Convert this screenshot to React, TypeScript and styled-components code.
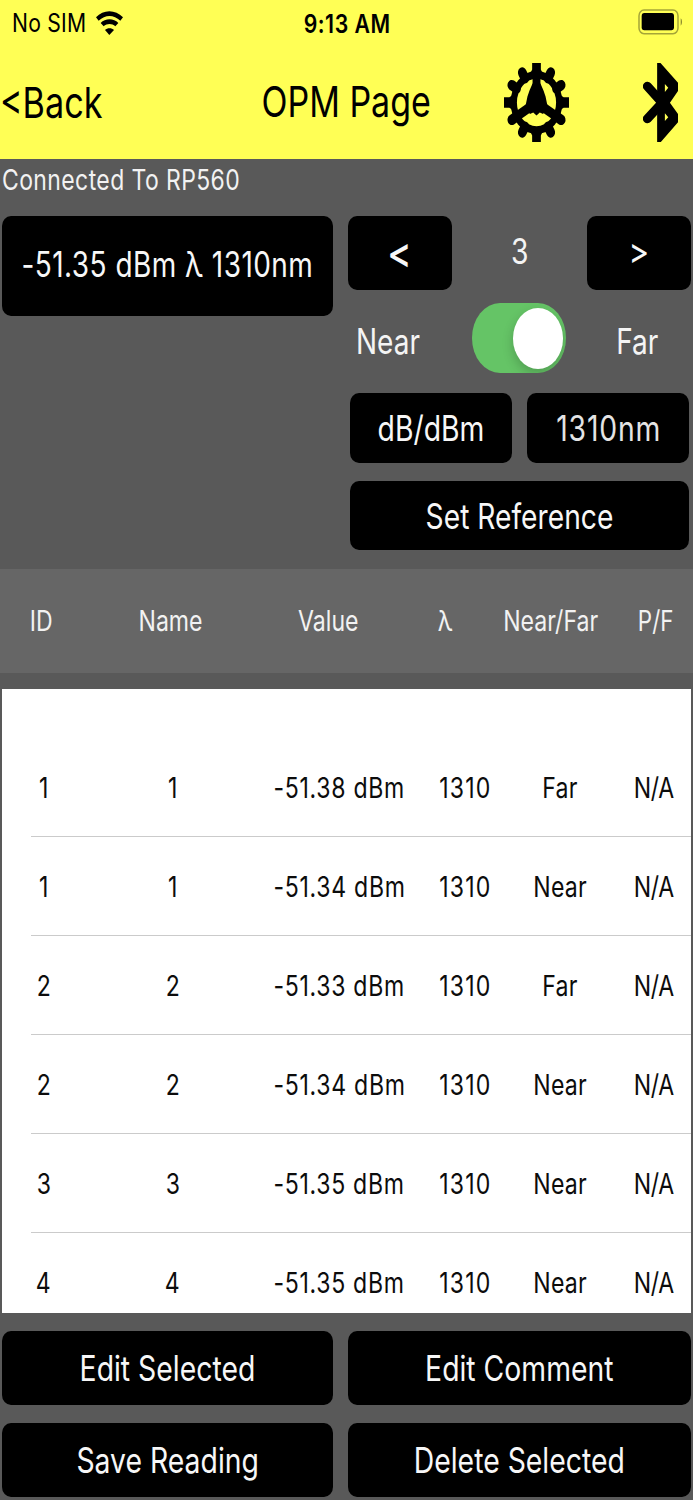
import React, { useState } from "react";
import styled, { createGlobalStyle } from "styled-components";

const GlobalStyle = createGlobalStyle`
  * { box-sizing: border-box; }
  body {
    margin: 0;
    background: #595959;
    font-family: Inter, "Liberation Sans", sans-serif;
    overflow: hidden;
  }
`;

const Screen = styled.main`
  width: 693px;
  height: 1500px;
  display: flex;
  flex-direction: column;
  background: #595959;
  overflow: hidden;
`;

const Label = styled.span<{
  $size: number;
  $narrow?: number;
  $track?: number;
  $weight?: number;
  $left?: boolean;
}>`
  display: block;
  flex: none;
  font-size: ${(p) => p.$size}px;
  font-weight: ${(p) => p.$weight ?? 400};
  letter-spacing: ${(p) => p.$track ?? 0}em;
  margin-right: ${(p) => -(p.$track ?? 0)}em;
  line-height: 1.2;
  white-space: nowrap;
  transform: scaleX(${(p) => p.$narrow ?? 0.81});
  transform-origin: ${(p) => (p.$left ? "left" : "center")} center;
`;

const Header = styled.header`
  height: 159px;
  flex: none;
  background: #ffff55;
  color: #000;
`;

const StatusBar = styled.div`
  height: 47px;
  padding: 0 11px 0 12px;
  display: grid;
  grid-template-columns: 1fr auto 1fr;
  align-items: center;
`;

const Carrier = styled.div`
  display: flex;
  align-items: center;
`;

const CarrierName = styled.div`
  width: 84px;
`;

const BatterySlot = styled.div`
  display: flex;
  justify-content: flex-end;
  padding-bottom: 3px;
`;

const NavBar = styled.nav`
  height: 110px;
  padding-right: 15.5px;
  display: grid;
  grid-template-columns: 262px 168px 1fr;
  align-items: center;
`;

const NavTitle = styled.div`
  display: flex;
  justify-content: center;
  padding-bottom: 1px;
`;

const BackLink = styled.div`
  padding-top: 1px;
`;

const NavIcons = styled.div`
  display: flex;
  justify-content: flex-end;
  gap: 74px;
`;

const Connection = styled.div`
  height: 57px;
  flex: none;
  padding: 5px 0 0 2px;
  color: #f2f2f2;
`;

const Controls = styled.section`
  height: 352.5px;
  flex: none;
  display: grid;
  grid-template-columns: 331px 342.6px;
  column-gap: 15px;
  padding-left: 2px;
  color: #f4f4f4;
`;

const Button = styled.button<{ $w?: number; $h: number; $lift?: number; $dim?: boolean }>`
  width: ${(p) => (p.$w ? `${p.$w}px` : "100%")};
  height: ${(p) => p.$h}px;
  flex: none;
  display: flex;
  align-items: center;
  justify-content: center;
  padding: 0 0 ${(p) => p.$lift ?? 0}px;
  border: 0;
  border-radius: 9px / 10px;
  background: #000;
  color: ${(p) => (p.$dim ? "#e4e4e4" : "#f7f7f7")};
  font-family: inherit;
`;

const Adjustments = styled.div`
  display: flex;
  flex-direction: column;
`;

const Stepper = styled.div`
  height: 74px;
  display: flex;
  justify-content: space-between;
`;

const StepValue = styled.div`
  height: 69px;
  padding-left: 1px;
  display: flex;
  align-items: center;
`;

const EndRow = styled.div`
  height: 103px;
  display: grid;
  grid-template-columns: 80px 182px 55px;
  align-items: center;
  justify-items: center;
  padding-bottom: 7px;
`;

const EndName = styled.div`
  padding-top: 6px;
  width: 80px;
  display: flex;
  justify-content: center;
`;

const Toggle = styled.div<{ $on: boolean }>`
  width: 94px;
  height: 70px;
  padding: 4.5px 3px 4px 4px;
  display: flex;
  justify-content: ${(p) => (p.$on ? "flex-end" : "flex-start")};
  border-radius: 28px / 35px;
  background: ${(p) => (p.$on ? "#65c466" : "#8a8a8a")};
  overflow: hidden;
`;

const Knob = styled.div`
  width: 50.5px;
  height: 61px;
  border-radius: 50%;
  background: #fff;
  box-shadow: 0 5px 12px rgba(0, 0, 0, 0.2);
`;

const UnitRow = styled.div`
  display: flex;
  justify-content: space-between;
  padding: 0 2px;
  margin-bottom: 18px;
`;

const ReferenceRow = styled.div`
  padding: 0 2px;
`;

const TableHead = styled.div`
  height: 104.5px;
  flex: none;
  display: grid;
  grid-template-columns: 82px 178px 137px 97px 113px 86px;
  align-items: center;
  background: #666;
  color: #f2f2f2;
`;

const Cell = styled.div<{ $inset?: number }>`
  min-width: 0;
  display: flex;
  justify-content: center;
  padding-left: ${(p) => p.$inset ?? 0}px;
`;

const List = styled.div`
  height: 624px;
  flex: none;
  margin: 16px 2px 0;
  padding-top: 49px;
  background: #fff;
  color: #0c0c0c;
  overflow: hidden;
`;

const Row = styled.div`
  height: 98px;
  padding-top: 3px;
  display: grid;
  grid-template-columns: 83px 175px 158px 94px 95px 84px;
  align-items: center;
`;

const Separator = styled.div`
  height: 1px;
  margin-left: 29px;
  background: #cbcbcb;
`;

const Actions = styled.footer`
  display: grid;
  grid-template-columns: 331px 343px;
  gap: 18px 15px;
  padding: 18px 0 0 2px;
`;

const WifiIcon = () => (
  <svg width="27" height="25" viewBox="288 33 81 75" preserveAspectRatio="none">
    <path d="M288 52C310 28 346 28 369 52L361 62C341 43 316 43 296 62Z" />
    <path d="M302 69C316 54 341 54 355 69L346 79C336 70 321 70 311 79Z" />
    <path d="M315 90C322 83 335 83 342 90L328 105Z" />
  </svg>
);

const BatteryIcon = () => (
  <svg width="44" height="26" viewBox="444 27 132 78">
    <rect x="447" y="30" width="117" height="71" rx="15" ry="17" fill="none" stroke="#a5a537" strokeWidth="4.5" />
    <rect x="455" y="39" width="97" height="52" rx="8" ry="9" />
    <path d="M572 55Q576 57 576 66T572 77Z" fill="#8a8a2e" />
  </svg>
);

const GearIcon = () => (
  <svg width="65" height="79" viewBox="-39.5 -39.5 79 79" preserveAspectRatio="none">
    <circle r="27.6" fill="none" stroke="#000" strokeWidth="7.6" />
    {[0, 90, 180, 270].map((a) => (
      <path key={a} d="M-7.5 -29L-5.3 -33V-39.5H5.3V-33L7.5 -29Z" transform={`rotate(${a})`} />
    ))}
    {[30, 60, 120, 150, 210, 240, 300, 330].map((a) => (
      <path key={a} d="M0 -28V-34.6" stroke="#000" strokeWidth="10.6" strokeLinecap="round" transform={`rotate(${a})`} />
    ))}
    {[0, 120, 240].map((a) => (
      <path key={a} d="M-4.8 -27V0H4.8V-27Z" transform={`rotate(${a})`} />
    ))}
    <path d="M-4.8 -19L-8.5 -12L-11 -6L-13.5 4L-8 11.5L-4 10L0 13L4 10L8 11.5L13.5 4L11 -6L8.5 -12L4.8 -19Z" />
  </svg>
);

const BluetoothIcon = () => (
  <svg width="35" height="79" viewBox="458 188 104 237" preserveAspectRatio="none">
    <path
      fillRule="evenodd"
      d="M500 188H510L562 247V272L538 307L562 341V366L511 425H500ZM523 251V275L533 262ZM523 339V362L533 351Z"
    />
    <path d="M471 258L515 307L471 355" fill="none" stroke="#000" strokeWidth="27" strokeLinecap="round" />
  </svg>
);

const readings = [
  ["1", "1", "-51.38 dBm", "1310", "Far", "N/A"],
  ["1", "1", "-51.34 dBm", "1310", "Near", "N/A"],
  ["2", "2", "-51.33 dBm", "1310", "Far", "N/A"],
  ["2", "2", "-51.34 dBm", "1310", "Near", "N/A"],
  ["3", "3", "-51.35 dBm", "1310", "Near", "N/A"],
  ["4", "4", "-51.35 dBm", "1310", "Near", "N/A"],
];

const cellTracking = [0, 0, 0.03, 0.052, 0.01, -0.015];

const columns = ["ID", "Name", "Value", "λ", "Near/Far", "P/F"];

export default function App() {
  const [far, setFar] = useState(true);
  return (
    <Screen>
      <GlobalStyle />
      <Header>
        <StatusBar>
          <Carrier>
            <CarrierName>
              <Label $size={25.5} $narrow={0.83} $track={0.01} $left>No SIM</Label>
            </CarrierName>
            <WifiIcon />
          </Carrier>
          <Label $size={25} $weight={600} $narrow={0.85} $track={0.025}>9:13 AM</Label>
          <BatterySlot>
            <BatteryIcon />
          </BatterySlot>
        </StatusBar>
        <NavBar>
          <BackLink>
            <Label $size={43} $narrow={0.795} $left>&lt;Back</Label>
          </BackLink>
          <NavTitle>
            <Label $size={43} $narrow={0.79}>OPM Page</Label>
          </NavTitle>
          <NavIcons>
            <GearIcon />
            <BluetoothIcon />
          </NavIcons>
        </NavBar>
      </Header>

      <Connection>
        <Label $size={28} $narrow={0.82} $track={0.018} $left>Connected To RP560</Label>
      </Connection>

      <Controls>
        <Button $h={100} $lift={4}>
          <Label $size={35} $narrow={0.8} $track={0.016}>-51.35 dBm λ 1310nm</Label>
        </Button>
        <Adjustments>
          <Stepper>
            <Button $w={103.5} $h={74}>
              <Label $size={43} $weight={500} $narrow={0.85}>&lt;</Label>
            </Button>
            <StepValue>
              <Label $size={35}>3</Label>
            </StepValue>
            <Button $w={103.5} $h={74} $lift={2}>
              <Label $size={36} $narrow={0.87}>&gt;</Label>
            </Button>
          </Stepper>
          <EndRow>
            <EndName>
              <Label $size={35} $narrow={0.8}>Near</Label>
            </EndName>
            <Toggle $on={far} role="switch" aria-checked={far} onClick={() => setFar(!far)}>
              <Knob />
            </Toggle>
            <EndName>
              <Label $size={35} $narrow={0.8}>Far</Label>
            </EndName>
          </EndRow>
          <UnitRow>
            <Button $w={161.5} $h={70}>
              <Label $size={35}>dB/dBm</Label>
            </Button>
            <Button $w={161.5} $h={70} $dim>
              <Label $size={35} $track={0.028}>1310nm</Label>
            </Button>
          </UnitRow>
          <ReferenceRow>
            <Button $h={69}>
              <Label $size={35} $narrow={0.806}>Set Reference</Label>
            </Button>
          </ReferenceRow>
        </Adjustments>
      </Controls>

      <TableHead>
        {columns.map((name, i) => (
          <Cell key={name} $inset={i === 5 ? 11 : 0}>
            <Label $size={28.5} $narrow={i === 5 ? 0.785 : 0.81}>{name}</Label>
          </Cell>
        ))}
      </TableHead>

      <List>
        {readings.map((reading, r) => (
          <React.Fragment key={r}>
            <Row>
              {reading.map((value, i) => (
                <Cell key={i} $inset={i === 5 ? 9 : 0}>
                  <Label $size={28.5} $track={cellTracking[i]}>{value}</Label>
                </Cell>
              ))}
            </Row>
            <Separator />
          </React.Fragment>
        ))}
      </List>

      <Actions>
        {["Edit Selected", "Edit Comment", "Save Reading", "Delete Selected"].map((name) => (
          <Button key={name} $h={74}>
            <Label $size={35}>{name}</Label>
          </Button>
        ))}
      </Actions>
    </Screen>
  );
}
